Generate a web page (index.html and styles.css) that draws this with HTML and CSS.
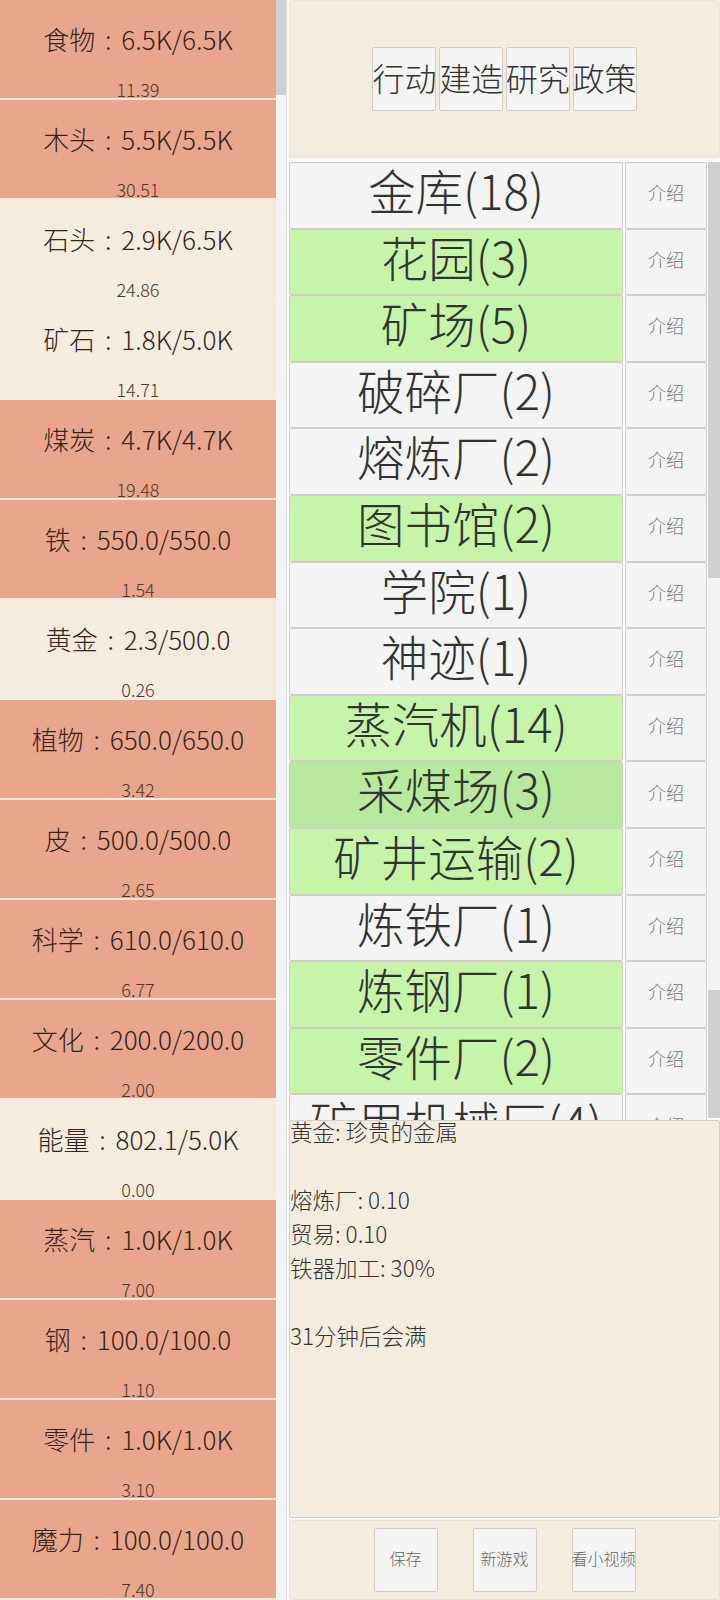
FILE: index.html
```html
<!DOCTYPE html>
<html lang="zh-CN">
<head>
    <meta charset="UTF-8">
    <meta name="viewport" content="width=device-width, initial-scale=1.0">
    <title>资源</title>
    <link rel="stylesheet" href="styles.css">
</head>
<body>
<div id="res">
    <div class="res-list">
        <div class="res full"><p class="res-name">食物 : 6.5K/6.5K</p><p class="res-rate">11.39</p></div>
        <div class="res full"><p class="res-name">木头 : 5.5K/5.5K</p><p class="res-rate">30.51</p></div>
        <div class="res"><p class="res-name">石头 : 2.9K/6.5K</p><p class="res-rate">24.86</p></div>
        <div class="res"><p class="res-name">矿石 : 1.8K/5.0K</p><p class="res-rate">14.71</p></div>
        <div class="res full"><p class="res-name">煤炭 : 4.7K/4.7K</p><p class="res-rate">19.48</p></div>
        <div class="res full"><p class="res-name">铁 : 550.0/550.0</p><p class="res-rate">1.54</p></div>
        <div class="res"><p class="res-name">黄金 : 2.3/500.0</p><p class="res-rate">0.26</p></div>
        <div class="res full"><p class="res-name">植物 : 650.0/650.0</p><p class="res-rate">3.42</p></div>
        <div class="res full"><p class="res-name">皮 : 500.0/500.0</p><p class="res-rate">2.65</p></div>
        <div class="res full"><p class="res-name">科学 : 610.0/610.0</p><p class="res-rate">6.77</p></div>
        <div class="res full"><p class="res-name">文化 : 200.0/200.0</p><p class="res-rate">2.00</p></div>
        <div class="res"><p class="res-name">能量 : 802.1/5.0K</p><p class="res-rate">0.00</p></div>
        <div class="res full"><p class="res-name">蒸汽 : 1.0K/1.0K</p><p class="res-rate">7.00</p></div>
        <div class="res full"><p class="res-name">钢 : 100.0/100.0</p><p class="res-rate">1.10</p></div>
        <div class="res full"><p class="res-name">零件 : 1.0K/1.0K</p><p class="res-rate">3.10</p></div>
        <div class="res full"><p class="res-name">魔力 : 100.0/100.0</p><p class="res-rate">7.40</p></div>
    </div>
    <div class="bar bar-left">
        <div class="thumb t1"></div>
        <div class="track"></div>
    </div>
</div>
<div id="main">
    <div class="tabs">
        <button class="tab">行动</button>
        <button class="tab">建造</button>
        <button class="tab">研究</button>
        <button class="tab">政策</button>
    </div>
    <div class="build-wrap">
        <ul class="build-list">
            <li><button class="bld">金库(18)</button><button class="intro">介绍</button></li>
            <li><button class="bld on">花园(3)</button><button class="intro">介绍</button></li>
            <li><button class="bld on">矿场(5)</button><button class="intro">介绍</button></li>
            <li><button class="bld">破碎厂(2)</button><button class="intro">介绍</button></li>
            <li><button class="bld">熔炼厂(2)</button><button class="intro">介绍</button></li>
            <li><button class="bld on">图书馆(2)</button><button class="intro">介绍</button></li>
            <li><button class="bld">学院(1)</button><button class="intro">介绍</button></li>
            <li><button class="bld">神迹(1)</button><button class="intro">介绍</button></li>
            <li><button class="bld on">蒸汽机(14)</button><button class="intro">介绍</button></li>
            <li><button class="bld on hover">采煤场(3)</button><button class="intro">介绍</button></li>
            <li><button class="bld on">矿井运输(2)</button><button class="intro">介绍</button></li>
            <li><button class="bld">炼铁厂(1)</button><button class="intro">介绍</button></li>
            <li><button class="bld on">炼钢厂(1)</button><button class="intro">介绍</button></li>
            <li><button class="bld on">零件厂(2)</button><button class="intro">介绍</button></li>
            <li><button class="bld">矿用机械厂(4)</button><button class="intro">介绍</button></li>
        </ul>
        <div class="bar bar-right">
            <div class="thumb t2"></div>
            <div class="track t3"></div>
            <div class="thumb t4"></div>
        </div>
    </div>
    <div class="info">
        <p>黄金: 珍贵的金属</p>
        <p></p>
        <p>熔炼厂: 0.10</p>
        <p>贸易: 0.10</p>
        <p>铁器加工: 30%</p>
        <p></p>
        <p>31分钟后会满</p>
    </div>
    <div class="foot">
        <button class="sbtn">保存</button>
        <button class="sbtn">新游戏</button>
        <button class="sbtn">看小视频</button>
    </div>
</div>
</body>
</html>
```

FILE: styles.css
```css
*{
    margin: 0;
    padding: 0;
    list-style: none;
    box-sizing: border-box;
    font-family: "Noto Sans CJK SC", "Noto Sans", sans-serif;
    font-weight: 300;
}
body{
    width: 720px;
    height: 1600px;
    overflow: hidden;
    display: flex;
    background: #fafafa;
}
button{
    background: #f4f4f4;
    border: 1px solid #d2cec6;
    border-radius: 2px;
    color: #333;
    padding: 0;
    white-space: nowrap;
}

/* 资源栏 */
#res{
    width: 287px;
    height: 1600px;
    display: flex;
    flex-shrink: 0;
}
.res-list{
    width: 276px;
    overflow: hidden;
    background: #f6ede2;
}
.res{
    height: 98px;
    margin-bottom: 2px;
    background: #f5ece0;
    text-align: center;
    color: #33251e;
}
.res.full{
    background: #e9a68d;
}
.res-name{
    padding-top: 21px;
    line-height: 36px;
    font-size: 26px;
    word-spacing: 4px;
}
.res-rate{
    margin-top: 22px;
    line-height: 20px;
    font-size: 18px;
    color: #4a3a33;
}

/* 滚动条 */
.bar{
    display: flex;
    flex-direction: column;
    background: #f3f3f5;
}
.bar-left{
    width: 11px;
    border-right: 1px solid #e2e2e6;
}
.bar-right{
    width: 12px;
    margin-top: 2px;
    height: 956px;
}
.thumb{
    background: #d0d0d3;
}
.track{
    flex: 1;
}
.t1{height: 95px;}
.t2{height: 416px;}
.t3{flex: none; height: 412px;}
.t4{flex: 1;}

/* 右侧 */
#main{
    width: 431px;
    margin-left: 2px;
    display: flex;
    flex-direction: column;
}
.tabs{
    height: 158px;
    background: #f5ece0;
    border: 1px solid #ebe5dc;
    border-radius: 2px;
    display: flex;
    justify-content: center;
    align-items: center;
    gap: 2.7px;
}
.tab{
    width: 64px;
    height: 64px;
    font-size: 32px;
    line-height: 1;
    padding-bottom: 4px;
    display: flex;
    justify-content: center;
    align-items: center;
    overflow: visible;
}
.build-wrap{
    height: 960px;
    margin-top: 2px;
    display: flex;
}
.build-list{
    flex: 1;
    overflow: hidden;
    padding-top: 2px;
}
.build-list li{
    height: 66.6px;
    display: flex;
    gap: 2px;
}
.bld{
    width: 334px;
    font-size: 47.5px;
    line-height: 1;
    padding-bottom: 11px;
    overflow: visible;
}
.bld.on{
    background: #c6f5aa;
}
.bld.hover{
    background: #b9e99e;
}
.intro{
    width: 82px;
    font-size: 18px;
    padding-bottom: 6px;
    color: #777;
}
.info{
    height: 398px;
    background: #f5ece0;
    border: 1px solid #cbd5c9;
    border-radius: 2px;
    color: #333;
    font-size: 22.5px;
}
.info p{
    height: 22px;
    line-height: 22px;
    margin-bottom: 13px;
    margin-top: -1px;
}
.foot{
    height: 80px;
    margin-top: 2px;
    background: #f5ece0;
    border: 1px solid #e2e3da;
    border-radius: 2px;
    display: flex;
    justify-content: center;
    align-items: center;
    gap: 35px;
}
.sbtn{
    width: 64px;
    height: 64px;
    font-size: 16px;
    color: #666;
    padding-bottom: 4px;
    display: flex;
    justify-content: center;
    align-items: center;
}
```
